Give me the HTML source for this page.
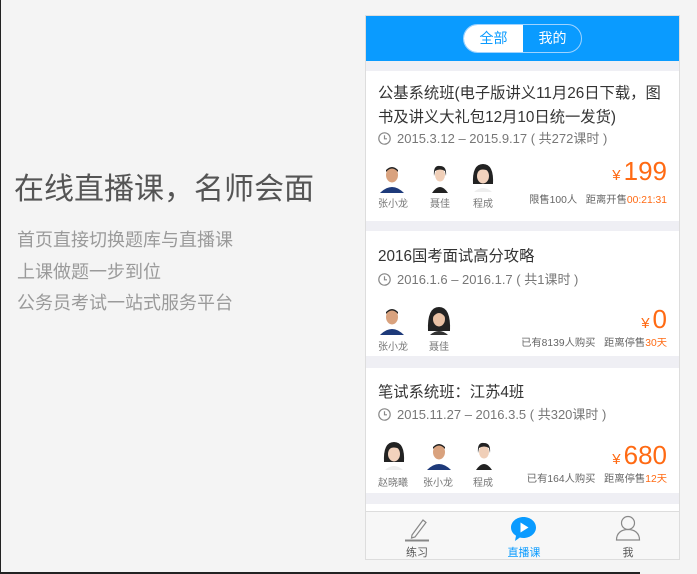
<!DOCTYPE html>
<html><head><meta charset="utf-8"><style>
*{margin:0;padding:0;box-sizing:border-box}
body{width:697px;height:574px;background:#f4f4f4;position:relative;overflow:hidden;font-family:"Liberation Sans","Noto Sans CJK SC",sans-serif}
.a{position:absolute;white-space:nowrap}
.edgeL{left:0;top:0;width:1px;height:574px;background:#222}
.edgeB{left:0;top:572px;width:640px;height:2px;background:#222}
.h1{left:14px;top:164px;font-size:30px;color:#555}
.sub{left:17px;font-size:18px;color:#9a9a9a}
.phone{left:365px;top:15px;width:315px;height:545px;background:#efeff4;border:1px solid #ddd}
.hdr{left:0;top:0;width:313px;height:45px;background:#0a9bff}
.pill{left:97px;top:8px;width:119px;height:29px;border:1px solid #9fd3ff;border-radius:15px;overflow:hidden}
.pill div{position:absolute;top:0;height:27px;width:59px;line-height:27px;text-align:center;font-size:14px}
.card{left:0;width:313px;background:#fff}
.t{left:12px;font-size:15.3px;color:#333}
.d{left:12px;font-size:13px;color:#777}
.d svg{vertical-align:-2px;margin-right:6px}
.nm{font-size:10px;color:#777;width:40px;text-align:center}
.pr{right:12px;color:#ff6a13;font-size:26px}
.pr span{font-size:15px;margin-right:3px}
.sm{right:12px;font-size:10.3px;color:#666}
.sm b{font-weight:normal;color:#ff6a13}
.tab{left:0;top:495px;width:313px;height:48px;background:#f7f7f7;border-top:1px solid #ddd}
.tl{font-size:11px;color:#555;text-align:center;width:60px}
</style></head><body>
<div class="a edgeL"></div><div class="a edgeB"></div>
<div class="a h1">在线直播课，名师会面</div>
<div class="a sub" style="top:226px">首页直接切换题库与直播课</div>
<div class="a sub" style="top:258px">上课做题一步到位</div>
<div class="a sub" style="top:289px">公务员考试一站式服务平台</div>

<div class="a phone">
 <div class="a hdr">
  <div class="a pill">
   <div style="left:0;background:#fff;color:#0a9bff">全部</div>
   <div style="left:59px;color:#fff">我的</div>
  </div>
 </div>

 <!-- card1 -->
 <div class="a card" style="top:55px;height:150px">
  <div class="a t" style="top:10px">公基系统班(电子版讲义11月26日下载，图</div>
  <div class="a t" style="top:34px">书及讲义大礼包12月10日统一发货)</div>
  <div class="a d" style="top:57px"><svg width="13" height="13" viewBox="0 0 13 13"><circle cx="6.5" cy="6.5" r="5.7" fill="none" stroke="#888" stroke-width="1.2"/><path d="M6.5 3.2V6.8H9" fill="none" stroke="#888" stroke-width="1.2"/></svg>2015.3.12 – 2015.9.17 ( 共272课时 )</div>
  <svg class="a" style="left:12px;top:92px" width="28" height="30"><path d="M2 30 Q14 18 26 30Z" fill="#1e3a7a"/><ellipse cx="14" cy="12" rx="6" ry="7.5" fill="#d9a27e"/><path d="M8 9 Q14 2 20 9 L20 7 Q14 1 8 7Z" fill="#222"/></svg>
  <svg class="a" style="left:60px;top:92px" width="28" height="30"><path d="M6 30 Q14 18 22 30Z" fill="#222"/><ellipse cx="14" cy="12" rx="5" ry="6.5" fill="#f0cfb8"/><path d="M8 13 Q7 2 14 3 Q21 3 20 13 L19 8 Q14 5 9 8Z" fill="#222"/></svg>
  <svg class="a" style="left:103px;top:91px" width="28" height="30"><path d="M4 22 Q3 2 14 2 Q25 2 24 22Z" fill="#222"/><path d="M5 30 Q14 22 23 30Z" fill="#eee"/><ellipse cx="14" cy="14" rx="6" ry="7.5" fill="#f2d2bd"/><path d="M8 12 Q10 5 20 9 L20 7 Q14 3 8 8Z" fill="#222"/></svg>
  <div class="a nm" style="left:7px;top:124px">张小龙</div>
  <div class="a nm" style="left:54px;top:124px">聂佳</div>
  <div class="a nm" style="left:97px;top:124px">程成</div>
  <div class="a pr" style="top:85px"><span>¥</span>199</div>
  <div class="a sm" style="top:120px">限售100人&nbsp;&nbsp;&nbsp;距离开售<b>00:21:31</b></div>
 </div>

 <!-- card2 -->
 <div class="a card" style="top:215px;height:125px">
  <div class="a t" style="top:13px">2016国考面试高分攻略</div>
  <div class="a d" style="top:38px"><svg width="13" height="13" viewBox="0 0 13 13"><circle cx="6.5" cy="6.5" r="5.7" fill="none" stroke="#888" stroke-width="1.2"/><path d="M6.5 3.2V6.8H9" fill="none" stroke="#888" stroke-width="1.2"/></svg>2016.1.6 – 2016.1.7 ( 共1课时 )</div>
  <svg class="a" style="left:12px;top:74px" width="28" height="30"><path d="M2 30 Q14 18 26 30Z" fill="#1e3a7a"/><ellipse cx="14" cy="12" rx="6" ry="7.5" fill="#d9a27e"/><path d="M8 9 Q14 2 20 9 L20 7 Q14 1 8 7Z" fill="#222"/></svg>
  <svg class="a" style="left:59px;top:74px" width="28" height="30"><path d="M3 26 Q2 2 14 2 Q26 2 25 26Z" fill="#222"/><path d="M5 30 Q14 22 23 30Z" fill="#333"/><ellipse cx="14" cy="14" rx="6" ry="7.5" fill="#e8c0a4"/><path d="M8 12 Q14 4 20 12 L20 8 Q14 3 8 8Z" fill="#222"/></svg>
  <div class="a nm" style="left:7px;top:107px">张小龙</div>
  <div class="a nm" style="left:53px;top:107px">聂佳</div>
  <div class="a pr" style="top:73px"><span>¥</span>0</div>
  <div class="a sm" style="top:103px">已有8139人购买&nbsp;&nbsp;&nbsp;距离停售<b>30天</b></div>
 </div>

 <!-- card3 -->
 <div class="a card" style="top:352px;height:125px">
  <div class="a t" style="top:12px">笔试系统班：江苏4班</div>
  <div class="a d" style="top:36px"><svg width="13" height="13" viewBox="0 0 13 13"><circle cx="6.5" cy="6.5" r="5.7" fill="none" stroke="#888" stroke-width="1.2"/><path d="M6.5 3.2V6.8H9" fill="none" stroke="#888" stroke-width="1.2"/></svg>2015.11.27 – 2016.3.5 ( 共320课时 )</div>
  <svg class="a" style="left:14px;top:72px" width="28" height="30"><path d="M4 22 Q3 2 14 2 Q25 2 24 22Z" fill="#222"/><path d="M5 30 Q14 22 23 30Z" fill="#eee"/><ellipse cx="14" cy="14" rx="6" ry="7.5" fill="#f2d2bd"/><path d="M8 12 Q10 5 20 9 L20 7 Q14 3 8 8Z" fill="#222"/></svg>
  <svg class="a" style="left:59px;top:72px" width="28" height="30"><path d="M2 30 Q14 18 26 30Z" fill="#1e3a7a"/><ellipse cx="14" cy="12" rx="6" ry="7.5" fill="#d9a27e"/><path d="M8 9 Q14 2 20 9 L20 7 Q14 1 8 7Z" fill="#222"/></svg>
  <svg class="a" style="left:104px;top:72px" width="28" height="30"><path d="M6 30 Q14 18 22 30Z" fill="#222"/><ellipse cx="14" cy="12" rx="5" ry="6.5" fill="#f0cfb8"/><path d="M8 13 Q7 2 14 3 Q21 3 20 13 L19 8 Q14 5 9 8Z" fill="#222"/></svg>
  <div class="a nm" style="left:7px;top:106px">赵晓曦</div>
  <div class="a nm" style="left:52px;top:106px">张小龙</div>
  <div class="a nm" style="left:97px;top:106px">程成</div>
  <div class="a pr" style="top:72px"><span>¥</span>680</div>
  <div class="a sm" style="top:102px">已有164人购买&nbsp;&nbsp;&nbsp;距离停售<b>12天</b></div>
 </div>

 <div class="a card" style="top:488px;height:8px"></div>

 <div class="a tab">
  <svg class="a" style="left:38px;top:4px" width="26" height="26" viewBox="0 0 26 26"><path d="M8 19 L19 4 L22 6.5 L11 21 L7.5 22Z" fill="none" stroke="#888" stroke-width="1.2"/><path d="M1 24.5H25" stroke="#888" stroke-width="2"/></svg>
  <div class="a tl" style="left:21px;top:32px">练习</div>
  <svg class="a" style="left:144px;top:4px" width="27" height="26" viewBox="0 0 27 26"><path d="M13.5 1C20.5 1 26 5.8 26 11.5S20.5 22 13.5 22c-1.3 0-2.5-.2-3.6-.5L5 25l1-5.3C2.9 17.8 1 14.8 1 11.5 1 5.8 6.5 1 13.5 1Z" fill="#0a9bff"/><path d="M10.5 6.5V16.5L18.5 11.5Z" fill="#fff"/></svg>
  <div class="a tl" style="left:128px;top:32px;color:#0a9bff">直播课</div>
  <svg class="a" style="left:249px;top:3px" width="26" height="28" viewBox="0 0 26 28"><circle cx="13" cy="8" r="6.5" fill="none" stroke="#888" stroke-width="1.2"/><path d="M1.5 25C1.5 18 6.5 14.5 13 14.5S24.5 18 24.5 25Z" fill="none" stroke="#888" stroke-width="1.2"/></svg>
  <div class="a tl" style="left:232px;top:32px">我</div>
 </div>
</div>
</body></html>
